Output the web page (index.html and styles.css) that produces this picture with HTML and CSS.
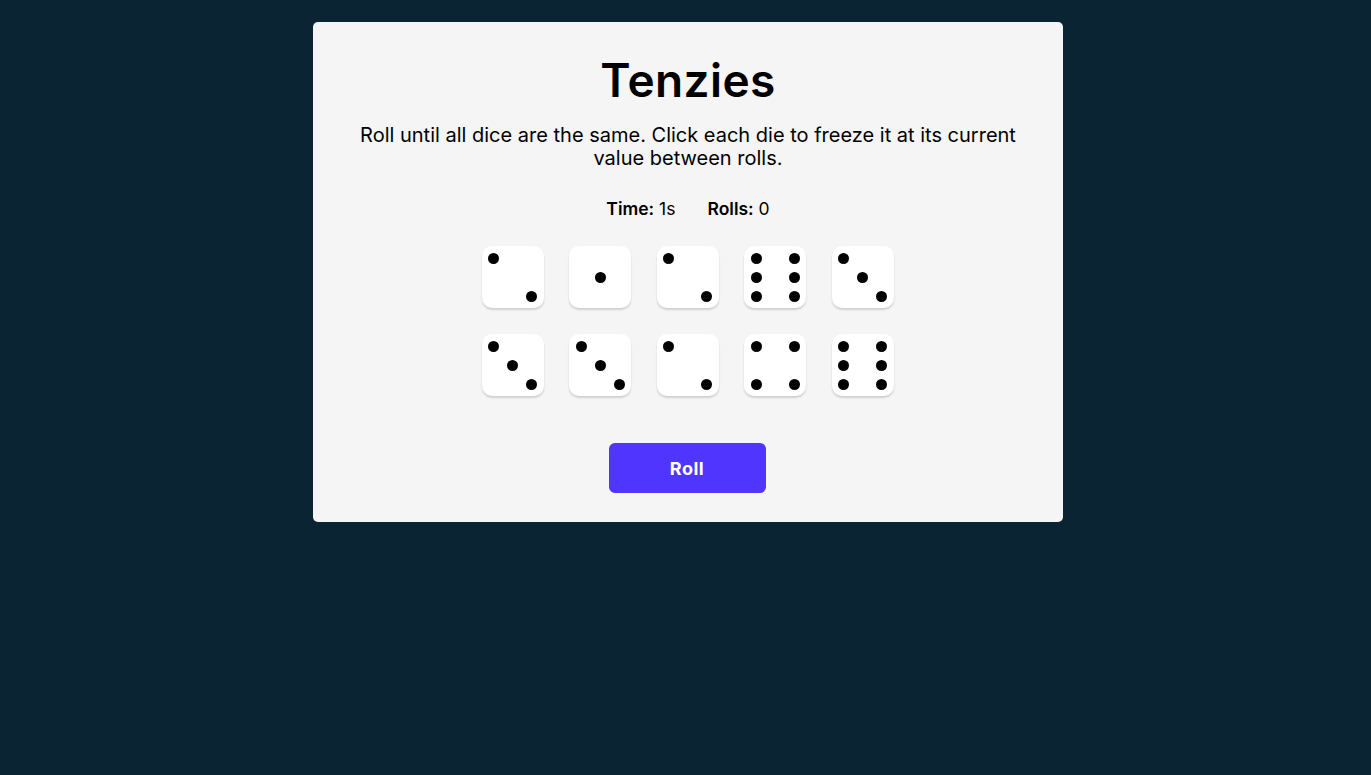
FILE: index.html
```html
<!DOCTYPE html>
<html lang="en">
<head>
<meta charset="utf-8">
<title>Tenzies</title>
<link rel="stylesheet" href="styles.css">
</head>
<body>
<main class="card">
  <h1 class="title">Tenzies</h1>
  <p class="instructions">Roll until all dice are the same. Click each die to freeze it at its current value between rolls.</p>
  <div class="stats">
    <span class="stat"><b>Time:</b> 1s</span>
    <span class="stat"><b>Rolls:</b> 0</span>
  </div>
  <div class="board">
    <button class="die v2"><i></i><i></i></button>
    <button class="die v1"><i></i></button>
    <button class="die v2"><i></i><i></i></button>
    <button class="die v6"><i></i><i></i><i></i><i></i><i></i><i></i></button>
    <button class="die v3"><i></i><i></i><i></i></button>
    <button class="die v3"><i></i><i></i><i></i></button>
    <button class="die v3"><i></i><i></i><i></i></button>
    <button class="die v2"><i></i><i></i></button>
    <button class="die v4"><i></i><i></i><i></i><i></i></button>
    <button class="die v6"><i></i><i></i><i></i><i></i><i></i><i></i></button>
  </div>
  <button class="roll">Roll</button>
</main>
</body>
</html>
```
FILE: styles.css
```css
* { box-sizing: border-box; }
html, body { margin: 0; }
body {
  background: #0B2434;
  font-family: Inter, "Noto Sans", sans-serif;
  display: flex;
  justify-content: center;
  padding: 22px 0 0 5px;
  min-height: 775px;
}
.card {
  width: 750px;
  height: 500px;
  background: #F5F5F5;
  border-radius: 5px;
  display: flex;
  flex-direction: column;
  align-items: center;
  padding-top: 30px;
}
.title {
  margin: 0;
  font-size: 46px;
  font-weight: 600;
  letter-spacing: 0.4px;
  line-height: 56px;
  color: #000;
}
.instructions {
  margin: 16px 0 0;
  width: 690px;
  text-align: center;
  font-size: 20px;
  line-height: 23px;
  color: #000;
}
.stats {
  margin-top: 29px;
  display: flex;
  gap: 32px;
  font-size: 17.5px;
  line-height: 20px;
  color: #000;
}
.stat b { font-weight: 600; }
.board {
  margin-top: 27px;
  margin-right: 1px;
  display: grid;
  grid-template-columns: repeat(5, 62px);
  column-gap: 25.5px;
  row-gap: 26px;
}
.die {
  position: relative;
  width: 62px;
  height: 62px;
  padding: 0;
  border: none;
  background: #fff;
  border-radius: 10px;
  box-shadow: 0 2px 2px rgba(0,0,0,0.15);
  cursor: pointer;
}
.die i {
  position: absolute;
  width: 11px;
  height: 11px;
  margin: -5.5px 0 0 -5.5px;
  border-radius: 50%;
  background: #000;
}
/* pip positions: 12 / 31 / 50 */
.v1 i { left: 31px; top: 31px; }
.v2 i:nth-child(1) { left: 12px; top: 12px; }
.v2 i:nth-child(2) { left: 50px; top: 50px; }
.v3 i:nth-child(1) { left: 12px; top: 12px; }
.v3 i:nth-child(2) { left: 31px; top: 31px; }
.v3 i:nth-child(3) { left: 50px; top: 50px; }
.v4 i:nth-child(1) { left: 12px; top: 12px; }
.v4 i:nth-child(2) { left: 50px; top: 12px; }
.v4 i:nth-child(3) { left: 12px; top: 50px; }
.v4 i:nth-child(4) { left: 50px; top: 50px; }
.v6 i:nth-child(1) { left: 12px; top: 12px; }
.v6 i:nth-child(2) { left: 50px; top: 12px; }
.v6 i:nth-child(3) { left: 12px; top: 31px; }
.v6 i:nth-child(4) { left: 50px; top: 31px; }
.v6 i:nth-child(5) { left: 12px; top: 50px; }
.v6 i:nth-child(6) { left: 50px; top: 50px; }
.roll {
  margin-top: 47px;
  margin-right: 2px;
  width: 157px;
  height: 50px;
  border: none;
  border-radius: 6px;
  background: #5035FF;
  color: #fff;
  font-family: Inter, "Noto Sans", sans-serif;
  font-size: 18px;
  font-weight: 700;
  letter-spacing: 0.5px;
  cursor: pointer;
}
```
